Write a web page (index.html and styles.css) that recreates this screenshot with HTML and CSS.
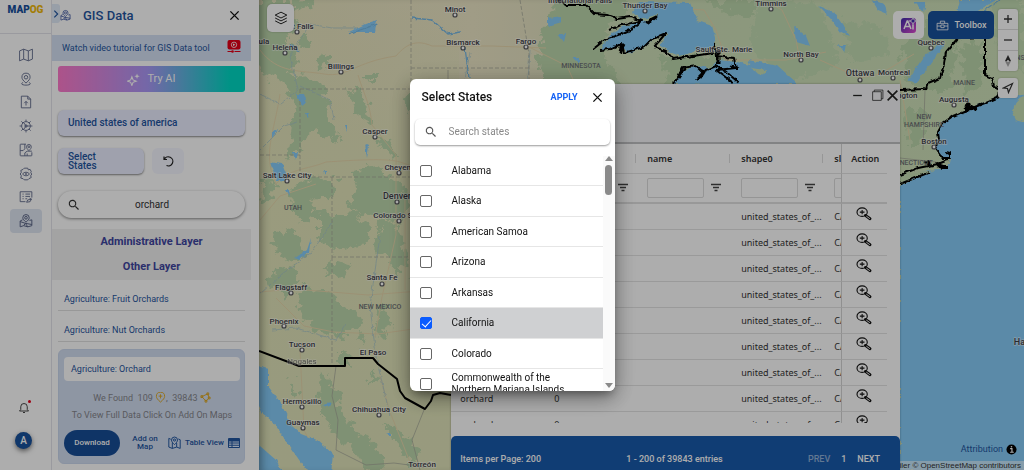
FILE: index.html
```html
<!DOCTYPE html>
<html lang="en">
<head>
<meta charset="utf-8">
<meta name="viewport" content="width=device-width, initial-scale=1">
<title>MAPOG - GIS Data</title>
<link rel="stylesheet" href="styles.css">
</head>
<body>
<svg class="defs" aria-hidden="true">
  <symbol id="search" viewBox="0 0 24 24"><path fill="currentColor" d="M15.5 14h-.8l-.3-.3A6.5 6.5 0 1 0 13.700 14.400l.3.3v.8l5 5 1.500-1.500zm-6 0a4.500 4.500 0 1 1 0-9 4.500 4.500 0 0 1 0 9z"/></symbol>
  <symbol id="close" viewBox="0 0 12 12"><path d="M1.500 1.500l9 9m0-9l-9 9" fill="none" stroke="currentColor" stroke-width="1.500"/></symbol>
  <symbol id="filter" viewBox="0 0 12 12"><path d="M1 2.500h10M3 5.500h6M4.500 8.500h3" fill="none" stroke="currentColor" stroke-width="1.300"/></symbol>
  <symbol id="zoomin" viewBox="0 0 18 15"><g fill="none" stroke="currentColor"><ellipse cx="7" cy="5.500" rx="5.500" ry="4.500" stroke-width="1.200"/><path d="M4.500 5.500h5M7 3.200v4.600" stroke-width="1.100"/><path d="M10.500 9l5 3.600" stroke-width="3" stroke-linecap="round"/></g><path d="M11.500 9.800l3.800 2.700" stroke="#fff" stroke-width="1"/></symbol>
  <symbol id="gis" viewBox="0 0 24 24"><g fill="none" stroke="currentColor" stroke-width="1.700" stroke-linejoin="round"><path d="M12 14C8.500 11 6.500 9 6.500 6.500a5.500 5.500 0 0 1 11 0C17.500 9 15.500 11 12 14z"/><circle cx="12" cy="6.500" r="2.300"/><path d="M6 10l-4 2v10l6-2 7 2 7-2V10l-4 1M8 20l3-4-9-3M11 16l11 2M15 22l-4-6"/></g></symbol>
  <symbol id="mappin" viewBox="0 0 24 24"><g fill="none" stroke="currentColor" stroke-width="1.800" stroke-linejoin="round"><path d="M5 5L1.500 3.500v16L8 22l8-2.500 6.500 2.500V6L19 4.500M8 22V11M16 19.500V12"/><path d="M12 15C8.500 11.500 6.500 9.500 6.500 6.500a5.500 5.500 0 0 1 11 0c0 3-2 5-5.500 8.500z"/><circle cx="12" cy="6.500" r="2"/></g></symbol>
</svg>

<div class="app">
  <nav class="rail" aria-label="Main">
    <div class="logo">MAP<span>OG</span></div>
    <div class="rail-items">
      <button aria-label="Maps"><svg viewBox="0 0 24 24"><path d="M1 5l7-3 8 3 7-3v17l-7 3-8-3-7 3zM8 2v17M16 5v17"/></svg></button>
      <button aria-label="Places"><svg viewBox="0 0 24 24"><path d="M12 19c-5-4.500-7-7-7-10a7 7 0 0 1 14 0c0 3-2 5.500-7 10zM7 18c-5 2-2 4.500 5 4.500s10-2.500 5-4.500"/><circle cx="12" cy="9" r="3"/></svg></button>
      <button aria-label="Upload"><svg viewBox="0 0 24 24"><path d="M4 2h11l5 5v15H4zM15 2v5h5M12 18v-7M9 14l3-3 3 3"/></svg></button>
      <button aria-label="Process"><svg viewBox="0 0 24 24"><circle cx="12" cy="12" r="7.500"/><path d="M12 12h7M12 12L8 6M12 12l-4 6M12 1v3.500M12 19.500V23M1 12h3.500M19.500 12H23M4 4l3 3M17 17l3 3M4 20l3-3M17 7l3-3"/><circle cx="12" cy="12" r="2"/></svg></button>
      <button aria-label="Map tools"><svg viewBox="0 0 24 24"><path d="M12 2H3q-1 0-1 1v18q0 1 1 1h18q1 0 1-1v-5M10 2v8l-3 3H2M10 22v-5l4-3h8M14 22v-4"/><path d="M17 13c-3-3-4-4-4-6.500a4 4 0 0 1 8 0c0 2.500-1 3.500-4 6.500z"/><circle cx="17" cy="6.500" r="1.500"/></svg></button>
      <button aria-label="Visibility settings"><svg viewBox="0 0 24 24"><path d="M9 2h6l1 3 3-1 2 4-1 2 2 2-2 3 1 3-4 2-2 2H9l-2-2-4-1 1-4-2-3 2-3-1-3 4-2z"/><path d="M6 12c3-4 9-4 12 0-3 4-9 4-12 0z"/><circle cx="12" cy="12" r="1"/></svg></button>
      <button aria-label="Reports"><svg viewBox="0 0 24 24"><path d="M11 20H2V3h20v10M6 7h2M11 7h8M6 11h2M11 11h8M6 15h2M11 15h3M13 21l2-4 6-1-2 4zM18 14l4 2"/></svg></button>
      <button class="active" aria-label="GIS data"><svg class="gis"><use href="#gis"/></svg></button>
    </div>
    <button class="bell" aria-label="Notifications"><svg viewBox="0 0 24 24"><path d="M3 18h18l-2.500-3V9.500a6.500 6.500 0 0 0-13 0V15zM10 21h4"/></svg><i></i></button>
    <button class="avatar">A</button>
  </nav>

  <aside class="panel">
    <header class="panel-head">
      <button class="collapse" aria-label="Collapse"><svg viewBox="0 0 8 12"><path d="M2 2l4 4-4 4" fill="none" stroke="currentColor" stroke-width="1.400"/></svg></button>
      <svg class="head-icon"><use href="#gis"/></svg>
      <h1>GIS Data</h1>
      <button class="plain" aria-label="Close panel"><svg class="x"><use href="#close"/></svg></button>
    </header>
    <a class="tutorial" href="#">Watch video tutorial for GIS Data tool
      <svg viewBox="0 0 14 13"><rect x=".5" width="13" height="9.500" rx="2" fill="#e50019"/><circle cx="7" cy="4.800" r="2.700" fill="none" stroke="#fff" stroke-width=".8"/><path d="M6 3.500v2.600l2.300-1.300z" fill="#fff"/><path d="M.5 11.500h4.500M7.500 11.500h6" stroke="#e50019" stroke-width="1"/><circle cx="5.500" cy="11.500" r="1.300" fill="#e50019"/></svg>
    </a>
    <div class="panel-body">
      <button class="ai"><svg viewBox="0 0 24 24"><path d="M9 7l2.200 5.800L17 15l-5.800 2.200L9 23l-2.200-5.800L1 15l5.800-2.200z" fill="none" stroke="#fff" stroke-width="2"/><path d="M18.500 1l1.300 3.700 3.700 1.300-3.700 1.300-1.300 3.700-1.300-3.700L13.500 6l3.700-1.300z" fill="#fff"/></svg>Try AI</button>
      <button class="country">United states of america</button>
      <div class="state-row">
        <button class="country states">Select<br>States</button>
        <button class="reset" aria-label="Reset"><svg viewBox="0 0 24 24"><path d="M4 3v6h6M4.500 9A9 9 0 1 1 9 21" fill="none" stroke="currentColor" stroke-width="2.400"/></svg></button>
      </div>
      <label class="search"><svg><use href="#search"/></svg><input type="text" value="orchard" aria-label="Search layers"></label>
    </div>
    <div class="groups"><button>Administrative Layer</button><button>Other Layer</button></div>
    <div class="layers">
      <a href="#">Agriculture: Fruit Orchards</a>
      <a href="#">Agriculture: Nut Orchards</a>
      <section class="card">
        <h2>Agriculture: Orchard</h2>
        <p>We Found &nbsp;109 <svg viewBox="0 0 24 24"><path d="M12 22C6 17 3 13 3 9.500a9 9 0 0 1 18 0C21 13 18 17 12 22zM12 5v9M8 9h8" /></svg>, &nbsp;39843 <svg viewBox="0 0 24 24"><path d="M4 10l13-6 3 9-7 7zM4 10l-1 2M2 8h4v4H2zM15 2h4v4h-4zM18 11h4v4h-4zM11 18h4v4h-4z"/></svg></p>
        <p>To View Full Data Click On Add On Maps</p>
        <div class="actions">
          <button class="download">Download</button>
          <button class="add">Add on Map</button>
          <svg class="pin"><use href="#mappin"/></svg>
          <button class="view">Table View</button>
          <svg class="grid" viewBox="0 0 12 10"><rect width="12" height="10" rx="1" fill="currentColor"/><path d="M1 4h2.500M4.500 4H11M1 6.200h2.500M4.500 6.200H11M1 8.400h2.500M4.500 8.400H11" stroke="#dce8fb" stroke-width="1.200"/></svg>
        </div>
      </section>
    </div>
  </aside>

  <main class="map">
    <svg class="canvas" viewBox="259 0 765 470" preserveAspectRatio="xMidYMid slice" role="img" aria-label="Map of North America">
      <defs>
        <linearGradient id="land"><stop offset="0" stop-color="#e5e3bd"/><stop offset=".28" stop-color="#ece6c6"/><stop offset=".38" stop-color="#e4e3c2"/><stop offset=".46" stop-color="#cfdfb8"/><stop offset="1" stop-color="#cfe2ba"/></linearGradient>
        <linearGradient id="south" x2="0" y2="1"><stop offset="0" stop-color="#e3e5ba" stop-opacity="0"/><stop offset=".4" stop-color="#e3e5ba"/><stop offset="1" stop-color="#e0e4ba"/></linearGradient>
        <filter id="rough" x="-5%" y="-5%" width="110%" height="110%" color-interpolation-filters="sRGB"><feTurbulence type="fractalNoise" baseFrequency=".11" numOctaves="4" seed="8"/><feDisplacementMap in="SourceGraphic" scale="20" xChannelSelector="R" yChannelSelector="G"/></filter>
        <filter id="coast" x="-5%" y="-5%" width="110%" height="110%" color-interpolation-filters="sRGB"><feTurbulence type="fractalNoise" baseFrequency=".2" numOctaves="2" seed="3"/><feDisplacementMap in="SourceGraphic" scale="4" xChannelSelector="R" yChannelSelector="G"/></filter>
      </defs>
      <rect x="259" width="765" height="470" fill="url(#land)"/>
      <rect x="259" width="200" height="470" fill="url(#south)"/>
      <g fill="#bcd6ab" filter="url(#rough)">
        <path d="M250 0h38l8 20-8 20 10 24-12 18-20-6-16-16zM283 80l16-6 18 8 12 6-2 26 14 30-10-2-18-16-12 22-14 12 6-34 4-22zM347 88l12 4 8 12 3 20-10-6-8-12zM300 40l14-2-3 12-12 2zM318 60l10-4 4 8-12 6zM366 76l8-2v10l-8-2zM374 138l16 4 8 12-6 2zM402 95l10 0-2 22zM292 0l20-2 6 8-20 4z"/>
        <path d="M292 184l34-6 12 6-6 14-22 2 12 18-20 4-12-14zM352 170l24-4 16 14 14 4 2 22-14 16-18-10-14 4-14-8 10-18zM262 180l10-2 2 20-10 6zM318 212l40 2 12 16-8 16-30 6-14-20zM270 240l14-10 14 6 8 20-20 6zM380 218l20 8 8 34-10 16-14-20-10-10z"/>
        <path d="M262 278l30-14 8 16-14 18zM302 286l24 6 20 16 14 8-2 12-22 10-24-12-14-18zM380 302l10 18-6 20-8-8zM330 262l22 4-6 10-20 2zM360 332l8 6-4 8zM412 270l12 18-6 8z"/>
        <path d="M322 372l12 12 6 26 16 22 20 12 14 26-22 2-20-26-20-20-8-24zM340 350l8 4 2 14-10-2zM368 366l8 10-3 12zM385 422l24 16 12 22-10 8zM290 382l8 6-3 14z"/>
        <path d="M558 0l70-4v18l-20 14-4 30 20 30-80 0-8-30 8-30zM560 10l14 4v30l-14 10zM660 56l60 0 30 30-80 0zM700 0l60 0-10 20zM900 50l30-30 30 10-10 60-40 0zM960 46l22-4v40l-16 12zM905 105l22 10-6 30-12 0z"/>
      </g>
      <g fill="#c3dcb3" filter="url(#rough)"><path d="M760 0l60 4 20 60-60 20-30-40zM840 20l40 6 10 30-40 6zM990 0h34v70l-24-20zM730 66l40 6 10 14-40 0z"/></g>
      <g fill="none" stroke="#e6d6ac" stroke-width="1">
        <path d="M260 50c18 24 40 20 64 24s30-12 72-18c12-14 22-16 36-10l60 0 54 2M358 75c6 20 12 28 14 50l24 30v80l-14 62-7 40M276 184c14-16 30-14 50-22 30-2 60-4 74 0l24 8M276 184c-14-30-2-50 4-90M276 298l28 28 30 6 44 2 56-8M260 292l34-3 74 6 52-4M405 200l0 90M300 350l4 80 20 40M380 376l10 36 20 50M527 46l40 20 18 40M672 8l32 2 12 20 10 30 60 0 40-8M764 0l18 10 14 30 4 20M820 60l40 18 20-4 34-20M900 80l10 60M260 220l20-24 36-12"/>
      </g>
      <g fill="none" stroke="#a5c3c8" stroke-width=".7" filter="url(#coast)"><path d="M260 94l20 10 18-14-8-34 20-32 22 4 36 0M260 150l24-24 14-4M332 222l-20 30-30 22-22 20M380 236l-10 70 6 50 14 60M272 330l24-2 40 12 10-16M300 86l30 14 4 20M470 52l-5 28M530 50l-2 30 4 12"/></g>
      <g fill="none" stroke="#a3a598" stroke-width=".7"><path stroke-dasharray="4 2" d="M300 89h110M300 89v88M300 177h110M260 155h40M332 177v80M332 257h90M332 257v109M411 0v90M411 68h118M520 0l9 54v60"/><path d="M336 366l-4 30 6 24-2 30 30 15 28-2 30 4M424 410l-12 30 8 30M448 70v14M661 13l-30 34M661 13l98 70M900 158l36 4M925 90l-2 60M960 0v30"/></g>
      <g fill="#86ccf8">
        <path filter="url(#coast)" d="M600 50l12-17 10-6 20-6-10-9 8-10 50 1 8 18 14 5 4 14-4 7-12 3-20 6-8-3-12-8 8-12-13 5-10 9-15 6-10-7zM674 84l6-12 16-6 14 2 8-8 20 2 32 8 4 12-20 4zM748 60l30 6 20 18h-36z"/>
        <path filter="url(#coast)" d="M998 97l-13 5-20 8-22 13-5 9 1 8-4 8 7 10 8 0-2 10-20 2-14 4-14 0v296h134V94z"/>
        <path filter="url(#coast)" d="M250 364l18 5v17l12 16 12 24 9 8 16 6 16 14-2 20-22 0-14-20-12-17-10-15-12-10-11-22zM250 440l10 6 16 14 8 16h-34z"/>
        <path filter="url(#coast)" d="M270 162l12 2 4 10-2 8-8-2zM296 94l8 0 3 8-5 4zM349 32l16-8 12-4-2 12-14 0zM293 152l4 0-2 8zM365 144l4 2-2 12zM305 112l3 0-1 6zM345 125l2 0v6zM286 190l3 0 1 6zM324 170l2 0v6zM272 132l6-2-6 8zM295 258l12-8 4-12-2 14-10 8zM548 18l14-2 0 6-14 4zM558 34l8 0-2 8zM573 58l6 0 0 6zM322 405l10-2-4 4zM386 434l5 0v2z"/>
        <path filter="url(#coast)" d="M818 6l16 6 16 24-10-4-10-14zM872 0l12 4 4 10-10-4zM960 0h36l-20 12-14 18-10 4zM914 2l12 0-2 10zM908 80l16-24 20-14-2 6-26 36zM794 26l12 10 4 10-14-4zM838 45l8 0-2 8z"/>
      </g>
      <path fill="#c8dfb4" filter="url(#coast)" d="M1030 92l-12 8-6 12 4 8 14 4zM900 174l34-4-30 14-4 0zM640 20l18-6-6 8zM750 68l16 2-4 6z"/>
      <g fill="none" stroke="#78b8e2" stroke-width="1.300" filter="url(#coast)"><path d="M412 18l20 2 16 14 12-2M465 48l4 30M348 34l30-10M1000 0l-40 28M300 52l-10-8"/></g>
      <g fill="none" stroke="#000" stroke-width="2" stroke-linejoin="round">
        <path filter="url(#coast)" d="M556-2l10 7 20 0 9 9 12 1 10 4 13-2 12 4-10 8-14 6-12 4-14 11M600 50l10-1 12-6 2 10 20-6 8-8 14-6-12 14 12 4 7 8 20-3 20-3M609 30l12-5 20-4M674 84l8-16 14-2 6 6 14-6 8 4 14 12M714 44l2 12 18 2 2 10-20 2 16 12"/>
        <path stroke-width="3" filter="url(#coast)" d="M646 22l10-5-8 6zM614 48l8-4-2 8 4-8M678 78l4-6 4-4M696 80l8-8-4 6M718 50l0 14M730 66l8 2"/>
        <path d="M259 351l40 15h46v-8h28l5 6 19 15 3 12 5 7 20 11 6-8 2-6 7-2 11 2"/>
        <path filter="url(#coast)" d="M900 90l26-1 2-6 12-5 4-14 2-12 12-14 27-1v38l7 3 2 8 6 3-1 8-14 6-18 7-14 6-10 7-5 9 1 8-4 8 7 10 8 0 0-5-4-1M948 160l-10 4-20 4-18 7M900 184l30-12"/>
        <path stroke-width="4" filter="url(#coast)" d="M966 108l2-5 2 6 4-3M926 161l4 5M937 165l6 2 6 0M965 110l12-2"/>
      </g>
      <g fill="#fff" stroke="#57575d" stroke-width="1.200"><circle cx="297" cy="32" r="2"/><circle cx="285" cy="53" r="2"/><circle cx="341" cy="72" r="2"/><circle cx="375" cy="137" r="2"/><circle cx="399" cy="173" r="2"/><circle cx="287" cy="181" r="2"/><circle cx="397" cy="202" r="2"/><circle cx="399" cy="221" r="2"/><circle cx="382" cy="284" r="2"/><circle cx="291" cy="293" r="2"/><circle cx="284" cy="326" r="2"/><circle cx="302" cy="350" r="2"/><circle cx="302" cy="407" r="2"/><circle cx="303" cy="428" r="2"/><circle cx="379" cy="415" r="2"/><circle cx="455" cy="15" r="2"/><circle cx="463" cy="48" r="2"/><circle cx="526" cy="47" r="2"/><circle cx="645" cy="11" r="2"/><circle cx="771" cy="9" r="2"/><circle cx="801" cy="60" r="2"/><circle cx="860" cy="80" r="2"/><circle cx="893" cy="78" r="2"/><circle cx="931" cy="48" r="2"/><circle cx="954" cy="105" r="2"/><circle cx="934" cy="147" r="2"/></g>
      <g class="city"><text x="303" y="29">t Falls</text><text x="264" y="44">ula</text><text x="285" y="50">Helena</text><text x="341" y="69">Billings</text><text x="375" y="134">Casper</text><text x="402" y="170">Cheyenne</text><text x="287" y="178">Salt Lake City</text><text x="397" y="199" class="big">Denver</text><text x="404" y="218">Colorado Springs</text><text x="382" y="280">Santa Fe</text><text x="291" y="290">Flagstaff</text><text x="284" y="324">Phoenix</text><text x="302" y="347">Tucson</text><text x="302" y="364" class="soft">Nogales</text><text x="373" y="355">El Paso</text><text x="302" y="404">Hermosillo</text><text x="303" y="425">Guaymas</text><text x="379" y="412">Chihuahua City</text><text x="422" y="467">Torreón</text><text x="455" y="12">Minot</text><text x="463" y="45">Bismarck</text><text x="526" y="44">Fargo</text><text x="580" y="3">International Falls</text><text x="645" y="8">Thunder Bay</text><text x="771" y="6">Timmins</text><text x="724" y="52">Sault Ste. Marie</text><text x="801" y="57">North Bay</text><text x="860" y="76" class="big">Ottawa</text><text x="894" y="75">Montreal</text><text x="931" y="45">Quebec</text><text x="899" y="98">Burlington</text><text x="954" y="102">Augusta</text><text x="934" y="144">Boston</text><text x="1028" y="345" class="big">Halifax</text></g>
      <g class="region"><text x="293" y="210">UTAH</text><text x="380" y="309">NEW MEXICO</text><text x="581" y="68">MINNESOTA</text><text x="964" y="85">MAINE</text><text x="924" y="119">NEW</text><text x="924" y="127">HAMPSHIRE</text><text x="909" y="165">CONNECTICUT</text><text x="1022" y="60">BRUNSWICK</text></g>
    </svg>

    <button class="layers-btn" aria-label="Layers"><svg viewBox="0 0 24 24"><path d="M12 2l10 5-10 5L2 7zM2 12l10 5 10-5M2 17l10 5 10-5" fill="none" stroke="currentColor" stroke-width="1.700"/></svg></button>

    <div class="tools">
      <button class="ai-chip" aria-label="AI"><svg viewBox="0 0 16 16"><defs><linearGradient id="violet" x1="0" y1="0" x2="1" y2="1"><stop stop-color="#402cae"/><stop offset="1" stop-color="#e24bd2"/></linearGradient></defs><rect width="15" height="15" y="1" rx="3" fill="url(#violet)"/><path d="M3 12l3.200-8h.6L10 12M4.200 9.500h4.600M12 8v4.500" fill="none" stroke="#fff" stroke-width="1.500"/><path d="M12 0l1 3 3 1-3 1-1 3-1-3-3-1 3-1z" fill="#402cae" stroke="#fff" stroke-width=".7"/></svg></button>
      <button class="toolbox"><svg viewBox="0 0 24 20"><path d="M2 6h20v12H2zM8 6V2h8v4M2 11h7M15 11h7M9 9h6v5H9z" fill="none" stroke="#fff" stroke-width="1.500"/></svg>Toolbox</button>
      <div class="nav">
        <div class="nav-group">
          <button aria-label="Zoom in"><svg viewBox="0 0 12 12"><path d="M6 2v8M2 6h8" stroke="currentColor" stroke-width="1.300"/></svg></button>
          <button aria-label="Zoom out"><svg viewBox="0 0 12 12"><path d="M2 6h8" stroke="currentColor" stroke-width="1.300"/></svg></button>
          <button aria-label="Reset north"><svg viewBox="0 0 12 12"><path d="M6 0l3 6H3z" fill="#333"/><path d="M6 12l3-6H3z" fill="#aaa"/><circle cx="6" cy="6" r="1" fill="#fff"/></svg></button>
        </div>
        <div class="nav-group"><button aria-label="My location"><svg viewBox="0 0 12 12"><path d="M10.500 1.500L1.500 6 5.500 6.500 6.500 10.500z" fill="none" stroke="currentColor" stroke-width="1.200"/></svg></button></div>
      </div>
    </div>

    <a class="attribution" href="#">Attribution <svg viewBox="0 0 12 12"><circle cx="6" cy="6" r="5.500"/><path d="M4.500 5h2v4M4.500 9h4" stroke="#fff" stroke-width="1.300" fill="none"/><circle cx="6" cy="3" r=".9" fill="#fff"/></svg></a>
    <div class="credits">© MapTiler © OpenStreetMap contributors</div>

    <section class="window" aria-label="Attribute table">
      <header><button aria-label="Minimise"><svg viewBox="0 0 12 12"><path d="M2 6h8" stroke="currentColor" stroke-width="1.200"/></svg></button><button class="max" aria-label="Maximise"><svg viewBox="0 0 12 12"><path d="M1.500 2.500h8v8h-8zM3 2.500V1h8v8H9.500" fill="none" stroke="currentColor" stroke-width=".7"/></svg></button><button aria-label="Close"><svg viewBox="0 0 12 12"><use href="#close"/></svg></button></header>
      <div class="table-wrap">
        <table>
          <colgroup><col class="c1"><col class="c2"><col class="c3"><col class="c2"><col class="c5"><col class="c6"></colgroup>
          <thead>
            <tr><th>layer</th><th>osm</th><th>name</th><th>shape0</th><th>slug</th><th class="act">Action</th></tr>
            <tr class="filters"><td><div><input aria-label="Filter layer"><svg><use href="#filter"/></svg></div></td><td><div><input aria-label="Filter osm"><svg><use href="#filter"/></svg></div></td><td><div><input aria-label="Filter name"><svg><use href="#filter"/></svg></div></td><td><div><input aria-label="Filter shape0"><svg><use href="#filter"/></svg></div></td><td><div><input aria-label="Filter slug"></div></td><td class="act"></td></tr>
          </thead>
          <tbody id="rows"></tbody>
        </table>
      </div>
      <footer><span>Items per Page: 200</span><span>1 - 200 of 39843 entries</span><span class="pager"><button disabled>PREV</button><b>1</b><button>NEXT</button></span></footer>
    </section>
  </main>
</div>

<div class="scrim">
  <section class="dialog" role="dialog" aria-modal="true" aria-labelledby="dialog-title">
    <header><h2 id="dialog-title">Select States</h2><button class="apply">APPLY</button><button class="plain" aria-label="Close"><svg class="x"><use href="#close"/></svg></button></header>
    <label class="find"><svg><use href="#search"/></svg><input type="text" placeholder="Search states" aria-label="Search states"></label>
    <div class="list-area">
      <div class="list">
        <label><input type="checkbox"><span>Alabama</span></label>
        <label><input type="checkbox"><span>Alaska</span></label>
        <label><input type="checkbox"><span>American Samoa</span></label>
        <label><input type="checkbox"><span>Arizona</span></label>
        <label><input type="checkbox"><span>Arkansas</span></label>
        <label class="on"><input type="checkbox" checked><span>California</span></label>
        <label><input type="checkbox"><span>Colorado</span></label>
        <label><input type="checkbox"><span>Commonwealth of the Northern Mariana Islands</span></label>
      </div>
      <div class="bar" aria-hidden="true"><i class="up"></i><i class="thumb"></i><i class="down"></i></div>
    </div>
  </section>
</div>
<script src="app.js"></script>
</body>
</html>
```
FILE: app.js
```js
const rows = document.getElementById('rows');
for (let i = 0; i < 9; i++) {
  const tr = document.createElement('tr');
  tr.innerHTML = '<td>orchard</td><td>0</td><td></td><td>united_states_of_...</td><td>CA</td>' +
    '<td class="act"><button aria-label="Zoom to feature"><svg><use href="#zoomin"/></svg></button></td>';
  rows.appendChild(tr);
}
```
FILE: styles.css
```css
* { box-sizing: border-box; }
html, body { height: 100%; }
body { margin: 0; overflow: hidden; font: 10px/12px Roboto, "Liberation Sans", sans-serif; color: #222; background: #fff; }
button { padding: 0; border: 0; background: none; color: inherit; font: inherit; cursor: pointer; }
input { font: inherit; color: inherit; }
a { color: inherit; text-decoration: none; }
h1, h2, p { margin: 0; font-weight: 400; }
svg { display: block; flex: none; }
.defs { position: absolute; width: 0; height: 0; }
.app { display: flex; height: 100%; }

/* Icon rail */
.rail { width: 52px; flex: none; display: flex; flex-direction: column; align-items: center; border-right: 1px solid #e4e4ea; padding-bottom: 21px; }
.logo { width: 100%; height: 34px; padding-top: 3px; border-bottom: 1px solid #e4e4ea; text-align: center; font-size: 10px; line-height: 14px; font-weight: 900; color: #174f9c; }
.logo span { color: #f0b90a; }
.rail-items { display: grid; grid-auto-rows: 24px 23px 24px 24px; margin-top: 9px; flex: 1; align-content: start; }
.rail-items button { width: 32px; display: grid; place-items: center; border-radius: 4px; }
.rail-items svg { width: 14px; height: 14px; fill: none; stroke: #5b6688; stroke-width: 1.5; }
.rail-items .gis { color: #5b6688; stroke: none; }
.rail-items .active { background: #dfe6f2; }
.bell, .avatar { margin-right: 4px; }
.bell { position: relative; margin-bottom: 18px; }
.bell svg { width: 12px; height: 12px; fill: none; stroke: #333; stroke-width: 1.8; }
.bell i { position: absolute; top: -2px; right: -1px; width: 3px; height: 3px; border-radius: 50%; background: #e50019; }
.avatar { width: 17px; height: 17px; border-radius: 50%; background: #19519c; color: #fff; font-size: 10px; font-weight: 500; box-shadow: 0 2px 5px #0008; }

/* Side panel */
.panel { width: 207px; flex: none; padding-right: 8px; color: #1f55a0; overflow: hidden; }
.panel-head { display: flex; align-items: center; height: 35px; padding-right: 11px; padding-bottom: 4px; }
.panel-head h1 { flex: 1; font-size: 13px; line-height: 16px; font-weight: 500; margin-left: 12px; }
.collapse { width: 8px; height: 19px; margin-top: -4px; background: #e0eaf8; border-radius: 0 3px 3px 0; }
.collapse svg { width: 8px; height: 10px; }
.head-icon { width: 11px; height: 13px; color: #3b54a0; }
.plain { color: #111; }
.x { width: 11px; height: 11px; }
.tutorial { display: flex; align-items: center; justify-content: space-between; height: 26px; padding: 0 10px; background: #d5e1f3; font-size: 9px; }
.tutorial svg { width: 14px; height: 13px; margin-bottom: 3px; }
.panel-body { padding: 5px 6px 11px; }
.ai { width: 100%; height: 26px; display: flex; align-items: center; justify-content: center; gap: 7px; border-radius: 3px; background: linear-gradient(90deg, #ff7acb, #ab99f8 48%, #00d9c5 92%); color: #fff; font-size: 11px; }
.ai svg { width: 13px; height: 13px; }
.country { width: 100%; height: 26px; padding: 0 10px; border-radius: 6px; background: #ebeeff; box-shadow: 0 1px 2px #0007; text-align: left; font-size: 10px; font-weight: 500; }
.ai + .country { margin-top: 18px; }
.state-row { display: flex; gap: 8px; margin: 12px 0 17px; }
.states { width: 86px; line-height: 9px; }
.reset { width: 32px; border-radius: 6px; background: #f5f6ff; display: grid; place-items: center; color: #222; }
.reset svg { width: 12px; height: 12px; }
.search { display: flex; align-items: center; height: 27px; padding: 0 9px; border-radius: 14px; box-shadow: 0 1px 3px #0007; color: #333; }
.search svg { width: 14px; height: 14px; }
.search input { flex: 1; min-width: 0; margin-right: 13px; padding: 0; border: 0; outline: 0; background: none; font-size: 10px; text-align: center; }
.groups { height: 51px; background: #f0f0f0; display: flex; flex-direction: column; color: #3f46a0; font-size: 11px; font-weight: 700; }
.groups button { flex: 1; }
.layers { padding: 0 6px; }
.layers a { display: block; padding: 13px 6px 5px; line-height: 12px; border-bottom: 1px solid #e0e0e0; font-size: 9px; }
.card { margin-top: 7px; padding: 7px 4px 7px 5px; border: 1px solid #cbd8ee; border-radius: 6px; background: #d2ddf0; text-align: center; }
.card h2 { padding: 0 7px; border-radius: 4px; background: #fff; font-size: 9px; line-height: 24px; text-align: left; }
.card p { display: flex; align-items: center; justify-content: center; height: 17px; color: #85868c; font-size: 9px; white-space: pre; }
.card h2 + p { margin-top: 8px; }
.card p svg { width: 11px; height: 11px; fill: none; stroke: #dca51c; stroke-width: 2; }
.actions { display: flex; align-items: center; margin-top: 7px; font-size: 8px; line-height: 8px; font-weight: 500; }
.download { width: 56px; height: 26px; border-radius: 13px; background: #174d97; color: #fff; }
.add { width: 34px; margin: 0 6px 0 8px; }
.pin { width: 13px; height: 14px; }
.view { flex: 1; white-space: nowrap; }
.grid { width: 12px; height: 10px; }

/* Map */
.map { flex: 1; position: relative; overflow: hidden; box-shadow: inset 8px 0 10px -6px #0006; }
.canvas { position: absolute; inset: 0; width: 100%; height: 100%; z-index: -1; }
.city text { font-size: 8px; font-weight: 500; text-anchor: middle; fill: #3f3f48; stroke: #fff8; stroke-width: 1.5; paint-order: stroke; }
.city .big { font-size: 9px; }
.city .soft { opacity: .7; font-weight: 400; }
.region text { font-size: 7px; text-anchor: middle; fill: #6e7275; font-weight: 500; }
.layers-btn { position: absolute; left: 8px; top: 4px; width: 27px; height: 28px; border-radius: 5px; background: #fff; display: grid; place-items: center; box-shadow: 0 0 2px #0004; }
.layers-btn svg { width: 14px; height: 14px; }
.tools { position: absolute; top: 9px; right: 6px; display: flex; align-items: flex-start; gap: 4px; }
.ai-chip, .toolbox { height: 28px; margin-top: 2px; border-radius: 5px; display: flex; align-items: center; justify-content: center; }
.ai-chip { width: 31px; background: #fff; }
.ai-chip svg { width: 16px; height: 16px; }
.toolbox { width: 66px; gap: 6px; background: #19519c; color: #fff; font-size: 9px; font-weight: 500; }
.toolbox svg { width: 13px; height: 11px; }
.nav { display: grid; gap: 7px; }
.nav-group { width: 20px; background: #fff; border-radius: 3px; box-shadow: 0 0 2px #0004; }
.nav-group button { width: 20px; height: 20px; display: grid; place-items: center; color: #333; }
.nav-group button + button { height: 21px; border-top: 1px solid #ddd; }
.nav-group svg { width: 12px; height: 12px; }
.attribution { position: absolute; right: 7px; bottom: 15px; display: flex; align-items: center; gap: 3px; font-size: 9px; color: #1f55a0; }
.attribution svg { width: 11px; height: 11px; }
.credits { position: absolute; right: 0; bottom: 0; padding: 0 3px; height: 9px; font: 8px/9px "Liberation Sans", sans-serif; background: #fff8; color: #333; }

/* Attribute table window */
.window { position: absolute; left: 25%; right: 124px; top: 84px; bottom: 0; margin-left: 1px; display: flex; flex-direction: column; background: #fff; box-shadow: 0 0 2px #0005; }
.window > header { height: 60px; flex: none; display: flex; justify-content: flex-end; align-items: flex-start; gap: 7px; padding: 5px 1px; background: #f3f4f6; border-bottom: 2px solid #c0c1c3; }
.window > header svg { width: 13px; height: 13px; }
.window > header .max { margin-right: -5px; }
.table-wrap { flex: 1; min-height: 0; overflow: hidden; margin-bottom: 13px; }
table { table-layout: fixed; width: 436px; border-collapse: separate; border-spacing: 0; font: 9px/12px "Noto Sans", "Open Sans", sans-serif; color: #333; }
.c1 { width: 92px; } .c2 { width: 93px; } .c3 { width: 94px; } .c5 { width: 18px; } .c6 { width: 46px; }
th, td { padding: 0 0 0 11px; text-align: left; border-bottom: 1px solid #e4e4e4; overflow: hidden; white-space: nowrap; }
td:first-child, th:first-child { padding-left: 9px; }
th { height: 30px; font-weight: 600; background: linear-gradient(#ddd, #ddd) right center / 1px 9px no-repeat; }
th:nth-child(n+5) { background: none; }
.filters td { height: 30px; border-bottom: 2px solid #e0e0e0; }
.filters div { display: flex; align-items: center; }
.filters input { width: 57px; height: 20px; flex: none; border: 1px solid #dcdcdc; border-radius: 2px; background: #fff; margin-right: 6px; }
.filters svg { width: 12px; height: 12px; color: #444; }
tbody td { height: 26px; }
.act { border-left: 1px solid #d4d4d4; padding-left: 9px; }
tbody .act { padding: 0 0 5px 13px; }
.act svg { width: 18px; height: 14px; color: #111; }
.act button { display: block; }
.window footer { height: 34px; flex: none; display: flex; justify-content: space-between; align-items: center; padding: 11px 20px 0 9px; background: #195aac; border-radius: 5px 5px 0 0; color: #fff; font-size: 9px; font-weight: 500; }
.pager { display: flex; gap: 11px; }
.pager b { font-weight: 500; }
.pager :disabled { color: #fff8; }

/* State picker */
.scrim { position: fixed; inset: 0; display: flex; align-items: center; justify-content: center; background: rgba(0, 0, 0, .32); }
.dialog { width: 20%; min-width: 205px; height: 312px; display: flex; flex-direction: column; overflow: hidden; border-radius: 6px; background: #fff; box-shadow: 0 5px 8px -3px #0005, 0 8px 20px #0004, 0 3px 24px #0003; }
.dialog header { height: 36px; flex: none; display: flex; align-items: center; padding: 0 12px; }
.dialog h2 { flex: 1; font-size: 12px; font-weight: 500; color: #111; }
.apply { color: #1663f5; font-size: 9px; font-weight: 700; margin-right: 14px; }
.find { display: flex; align-items: center; gap: 11px; height: 26px; flex: none; margin: 4px 5px 11px; padding: 0 9px; border-radius: 5px; box-shadow: 0 1px 2px #0006; color: #555; }
.find svg { width: 14px; height: 14px; }
.find input { flex: 1; min-width: 0; border: 0; padding: 0; outline: 0; font-size: 10px; }
.find input::placeholder { color: #888; opacity: 1; }
.list-area { flex: 1; min-height: 0; display: flex; }
.list { flex: 1; display: grid; grid-auto-rows: 30px 31px; overflow: hidden; font-size: 10px; line-height: 12px; color: #111; }
.list label { display: flex; align-items: center; gap: 20px; padding: 0 24px 0 10px; border-bottom: 1px solid #e6e6e6; }
.list .on { background: #cfd0d2; }
.list input { appearance: none; position: relative; flex: none; width: 12px; height: 12px; margin: 0; border: 1px solid #666; border-radius: 2px; background: #fff; }
.list input:checked { background: #0b5cff; border-color: #0b5cff; }
.list input:checked::after { content: ""; position: absolute; left: 3px; top: 0; width: 4px; height: 8px; border: solid #fff; border-width: 0 1px 1px 0; transform: rotate(42deg); }
.bar { width: 12px; display: flex; flex-direction: column; align-items: center; padding: 0 0 3px; background: #fafafa; }
.bar i { width: 7px; }
.up { border: solid transparent; border-width: 0 4px 5px; border-bottom-color: #8a8a8a; }
.thumb { height: 30px; margin: 4px 0 auto; border-radius: 4px; background: #8a8a8a; }
.down { border: solid transparent; border-width: 5px 4px 0; border-top-color: #8a8a8a; }
```
